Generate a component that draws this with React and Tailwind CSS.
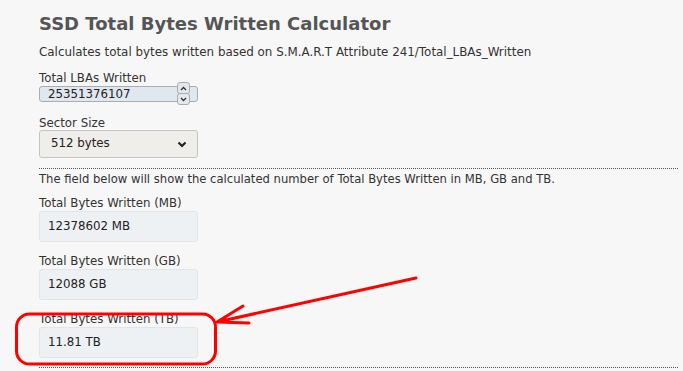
import React from "react";

const font = { fontFamily: '"DejaVu Sans", Verdana, sans-serif' };

function OutBox({ label, value, first }) {
  return (
    <div className={first ? "mt-[9px]" : "mt-[12px]"}>
      <div className="text-[11.8px] leading-[14px] text-[#333]">{label}</div>
      <div className="mt-[1px] flex h-[31px] w-[159px] items-center rounded-[3px] border border-[#e2e5e8] bg-[#eef1f4] pl-[8px] text-[11.8px] text-[#222]">
        {value}
      </div>
    </div>
  );
}

export default function App() {
  return (
    <div
      className="relative min-h-[371px] w-[683px] overflow-hidden bg-[#f7f7f7] pl-[39px] pr-[5px] pt-[12px]"
      style={font}
    >
      <h1 className="text-[18px] font-bold leading-[24px] text-[#555]">
        SSD Total Bytes Written Calculator
      </h1>
      <p className="mt-[8px] text-[11.9px] leading-[16px] text-[#333]">
        Calculates total bytes written based on S.M.A.R.T Attribute 241/Total_LBAs_Written
      </p>

      <div className="mt-[11px]">
        <div className="text-[11.8px] leading-[14px] text-[#333]">Total LBAs Written</div>
        <div className="relative mt-[1px] h-[16px] w-[159px] rounded-[3px] border border-[#a9adb2] bg-[#e1e7ee] pl-[8px] text-[11.8px] leading-[14px] text-[#222]">
          25351376107
          <div className="absolute left-[137px] top-[-5px] flex flex-col">
            <div className="flex h-[12px] w-[13px] items-center justify-center rounded-[3px] border border-[#a9adb2] bg-[#e4e8ec]">
              <svg width="7" height="5" viewBox="0 0 7 5">
                <path d="M1 4 L3.5 1.5 L6 4" fill="none" stroke="#333" strokeWidth="1.3" />
              </svg>
            </div>
            <div className="-mt-[1px] flex h-[12px] w-[13px] items-center justify-center rounded-[3px] border border-[#a9adb2] bg-[#e4e8ec]">
              <svg width="7" height="5" viewBox="0 0 7 5">
                <path d="M1 1 L3.5 3.5 L6 1" fill="none" stroke="#333" strokeWidth="1.3" />
              </svg>
            </div>
          </div>
        </div>
      </div>

      <div className="mt-[14px]">
        <div className="text-[11.8px] leading-[14px] text-[#333]">Sector Size</div>
        <div className="flex h-[28px] w-[159px] items-center justify-between rounded-[3px] border border-[#c4c4c4] bg-[#efeeea] pl-[11px] pr-[10px] text-[11.8px] text-[#222]">
          <span>512 bytes</span>
          <svg width="10" height="7" viewBox="0 0 10 7">
            <path d="M1.5 1.5 L5 5 L8.5 1.5" fill="none" stroke="#222" strokeWidth="2.2" />
          </svg>
        </div>
      </div>

      <div className="mt-[10px] border-t border-dotted border-[#555]" />
      <p className="mt-[2px] text-[11.6px] leading-[16px] text-[#333]">
        The field below will show the calculated number of Total Bytes Written in MB, GB and TB.
      </p>

      <OutBox first label="Total Bytes Written (MB)" value="12378602 MB" />
      <OutBox label="Total Bytes Written (GB)" value="12088 GB" />
      <OutBox label="Total Bytes Written (TB)" value="11.81 TB" />

      <div className="mt-[9px] border-t border-dotted border-[#555]" />

      <svg
        className="pointer-events-none absolute left-0 top-0"
        width="683"
        height="371"
        viewBox="0 0 683 371"
      >
        <rect x="16.5" y="314" width="199" height="50" rx="13" fill="none" stroke="#ff0000" strokeWidth="3" />
        <path
          d="M416 278 L217 322 M243 306 L217 322 L249 323"
          fill="none"
          stroke="#ff0000"
          strokeWidth="3"
          strokeLinecap="round"
          strokeLinejoin="round"
        />
      </svg>
    </div>
  );
}
